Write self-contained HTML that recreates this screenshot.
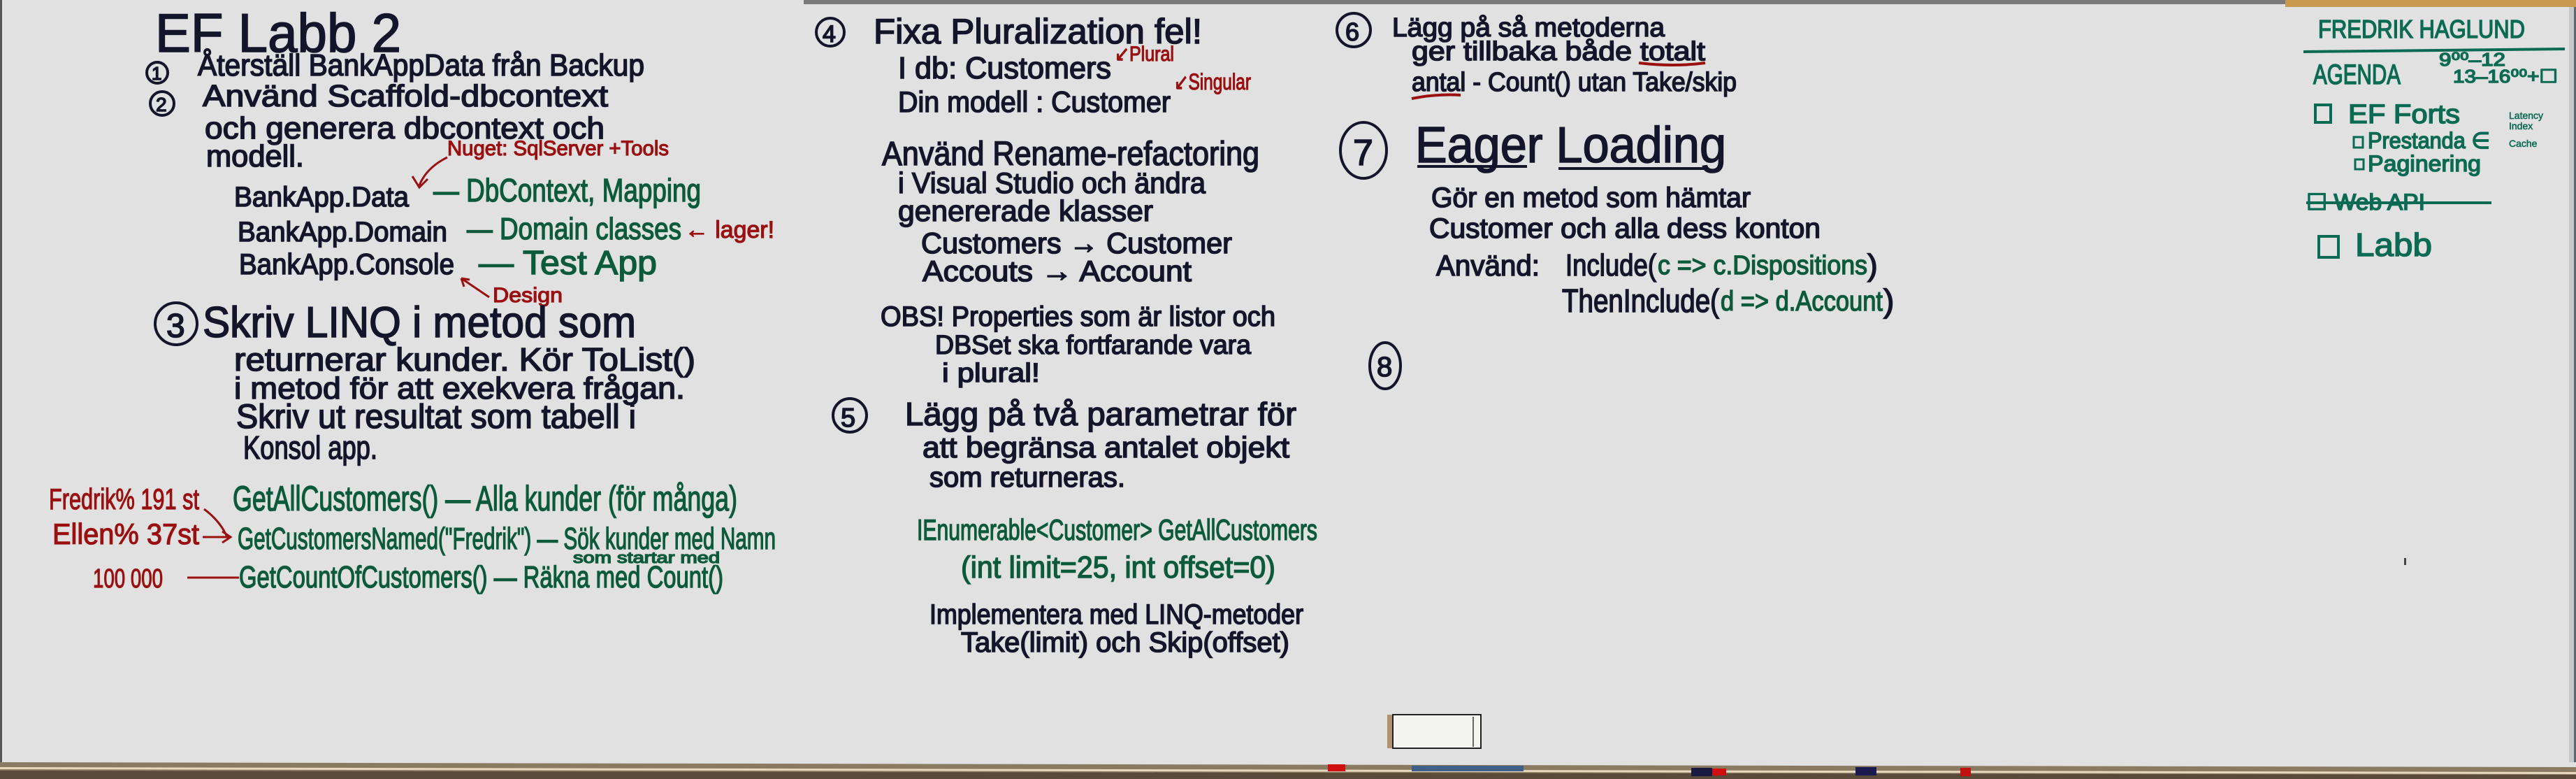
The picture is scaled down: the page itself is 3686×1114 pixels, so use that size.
<!DOCTYPE html>
<html><head><meta charset="utf-8"><style>
html,body{margin:0;padding:0;background:#e1e1e1;}
svg{display:block}
text{font-family:"Liberation Sans Narrow","Liberation Sans",sans-serif;}
.k{fill:#14142a;stroke:#14142a;stroke-width:1.6}.g{fill:#0c5a3c;stroke:#0c5a3c;stroke-width:1.4}.r{fill:#9a1010;stroke:#9a1010;stroke-width:1.2}.t{fill:#0b6a52;stroke:#0b6a52;stroke-width:1.5}
</style></head><body>
<svg width="3686" height="1114" viewBox="0 0 3686 1114" xmlns="http://www.w3.org/2000/svg">
<rect width="3686" height="1114" fill="#e1e1e1"/>
<rect x="1150" y="0" width="2120" height="6" fill="#7a7a7a"/>
<rect x="3270" y="0" width="416" height="10" fill="#c89a50"/>
<rect x="3676" y="10" width="10" height="1080" fill="#c8c8c8"/>
<rect x="3683" y="10" width="3" height="1080" fill="#5a6a70"/>
<rect x="0" y="0" width="3" height="1090" fill="#555"/>
<polygon points="0,1090 3686,1097 3686,1114 0,1114" fill="#8a7a62"/>
<polygon points="0,1097 3686,1104 3686,1107 0,1100" fill="#e8d8c0"/>
<polygon points="0,1102 3686,1108 3686,1114 0,1114" fill="#5a4a3a"/>
<rect x="1900" y="1093" width="25" height="10" fill="#d01010"/>
<rect x="2020" y="1095" width="160" height="8" fill="#40608a"/>
<rect x="2420" y="1098" width="30" height="12" fill="#1a1a40"/>
<rect x="2450" y="1099" width="20" height="10" fill="#d01010"/>
<rect x="2655" y="1097" width="30" height="12" fill="#1a1a50"/>
<rect x="2805" y="1098" width="15" height="12" fill="#c01010"/>
<rect x="1985" y="1022" width="55" height="48" fill="#a07040" opacity=".7"/>
<rect x="1993" y="1022" width="126" height="48" fill="#f4f4f0" stroke="#222" stroke-width="2"/>
<line x1="2108" y1="1025" x2="2108" y2="1068" stroke="#666" stroke-width="2"/>

<text class="k" x="222" y="74" font-size="78" textLength="352" lengthAdjust="spacingAndGlyphs">EF Labb 2</text>
<circle cx="225" cy="104" r="15" fill="none" stroke="#14142a" stroke-width="4"/>
<text class="k" x="217" y="114" font-size="26">1</text>
<text class="k" x="283" y="108" font-size="44" textLength="639" lengthAdjust="spacingAndGlyphs">Återställ BankAppData från Backup</text>
<circle cx="232" cy="148" r="17" fill="none" stroke="#14142a" stroke-width="4"/>
<text class="k" x="223" y="159" font-size="28">2</text>
<text class="k" x="290" y="152" font-size="44" textLength="580" lengthAdjust="spacingAndGlyphs">Använd  Scaffold-dbcontext</text>
<text class="k" x="293" y="198" font-size="44" textLength="572" lengthAdjust="spacingAndGlyphs">och generera dbcontext och</text>
<text class="k" x="295" y="238" font-size="44" textLength="140" lengthAdjust="spacingAndGlyphs">modell.</text>
<text class="r" x="640" y="222" font-size="30" textLength="317" lengthAdjust="spacingAndGlyphs">Nuget: SqlServer +Tools</text>
<path d="M640,225 Q610,240 600,265 M590,252 L600,268 L612,256" fill="none" stroke="#9a1010" stroke-width="3"/>
<text class="k" x="335" y="295" font-size="40" textLength="250" lengthAdjust="spacingAndGlyphs">BankApp.Data</text>
<text class="g" x="620" y="288" font-size="46" textLength="383" lengthAdjust="spacingAndGlyphs">— DbContext, Mapping</text>
<text class="k" x="340" y="345" font-size="40" textLength="300" lengthAdjust="spacingAndGlyphs">BankApp.Domain</text>
<text class="g" x="668" y="342" font-size="44" textLength="307" lengthAdjust="spacingAndGlyphs">— Domain classes</text>
<text class="r" x="980" y="340" font-size="34" textLength="128" lengthAdjust="spacingAndGlyphs">← lager!</text>
<text class="k" x="342" y="392" font-size="42" textLength="308" lengthAdjust="spacingAndGlyphs">BankApp.Console</text>
<text class="g" x="685" y="392" font-size="48" textLength="255" lengthAdjust="spacingAndGlyphs">— Test App</text>
<text class="r" x="705" y="432" font-size="30" textLength="100" lengthAdjust="spacingAndGlyphs">Design</text>
<path d="M700,425 L660,398 M660,398 L672,400 M660,398 L664,410" fill="none" stroke="#9a1010" stroke-width="3"/>
<circle cx="252" cy="463" r="30" fill="none" stroke="#14142a" stroke-width="4"/>
<text class="k" x="238" y="482" font-size="48">3</text>
<text class="k" x="290" y="482" font-size="62" textLength="620" lengthAdjust="spacingAndGlyphs">Skriv LINQ i metod som</text>
<text class="k" x="335" y="530" font-size="46" textLength="660" lengthAdjust="spacingAndGlyphs">returnerar kunder.  Kör ToList()</text>
<text class="k" x="335" y="570" font-size="44" textLength="645" lengthAdjust="spacingAndGlyphs">i metod för att exekvera frågan.</text>
<text class="k" x="338" y="612" font-size="48" textLength="572" lengthAdjust="spacingAndGlyphs">Skriv ut resultat som tabell i</text>
<text class="k" x="348" y="656" font-size="46" textLength="192" lengthAdjust="spacingAndGlyphs">Konsol app.</text>
<text class="r" x="70" y="728" font-size="42" textLength="215" lengthAdjust="spacingAndGlyphs">Fredrik% 191 st</text>
<text class="r" x="75" y="778" font-size="42" textLength="210" lengthAdjust="spacingAndGlyphs">Ellen%  37st</text>
<path d="M292,728 Q315,745 325,768 M290,768 L328,768 M318,760 L330,768 L318,776" fill="none" stroke="#9a1010" stroke-width="3"/>
<text class="g" x="333" y="730" font-size="50" textLength="722" lengthAdjust="spacingAndGlyphs">GetAllCustomers()  — Alla kunder (för många)</text>
<text class="g" x="340" y="785" font-size="44" textLength="770" lengthAdjust="spacingAndGlyphs">GetCustomersNamed("Fredrik") — Sök kunder med Namn</text>
<text class="g" x="820" y="805" font-size="22" textLength="210" lengthAdjust="spacingAndGlyphs">som startar med</text>
<text class="r" x="133" y="840" font-size="38" textLength="100" lengthAdjust="spacingAndGlyphs">100 000</text>
<line x1="268" y1="826" x2="342" y2="826" stroke="#9a1010" stroke-width="3"/>
<text class="g" x="342" y="840" font-size="44" textLength="693" lengthAdjust="spacingAndGlyphs">GetCountOfCustomers()  — Räkna med Count()</text>

<circle cx="1188" cy="46" r="20" fill="none" stroke="#14142a" stroke-width="4"/>
<text class="k" x="1177" y="60" font-size="34">4</text>
<text class="k" x="1250" y="62" font-size="50" textLength="470" lengthAdjust="spacingAndGlyphs">Fixa Pluralization fel!</text>
<text class="k" x="1285" y="112" font-size="44" textLength="305" lengthAdjust="spacingAndGlyphs">I db: Customers</text>
<text class="r" x="1595" y="87" font-size="30" textLength="85" lengthAdjust="spacingAndGlyphs">↙Plural</text>
<text class="k" x="1285" y="160" font-size="42" textLength="390" lengthAdjust="spacingAndGlyphs">Din modell : Customer</text>
<text class="r" x="1680" y="128" font-size="32" textLength="110" lengthAdjust="spacingAndGlyphs">↙Singular</text>
<text class="k" x="1262" y="236" font-size="48" textLength="540" lengthAdjust="spacingAndGlyphs">Använd Rename-refactoring</text>
<text class="k" x="1285" y="276" font-size="42" textLength="440" lengthAdjust="spacingAndGlyphs">i Visual Studio och ändra</text>
<text class="k" x="1285" y="316" font-size="42" textLength="365" lengthAdjust="spacingAndGlyphs">genererade klasser</text>
<text class="k" x="1318" y="362" font-size="42" textLength="445" lengthAdjust="spacingAndGlyphs">Customers  →  Customer</text>
<text class="k" x="1320" y="402" font-size="42" textLength="385" lengthAdjust="spacingAndGlyphs">Accouts  →  Account</text>
<text class="k" x="1260" y="466" font-size="40" textLength="565" lengthAdjust="spacingAndGlyphs">OBS! Properties som är listor och</text>
<text class="k" x="1338" y="506" font-size="38" textLength="452" lengthAdjust="spacingAndGlyphs">DBSet ska fortfarande vara</text>
<text class="k" x="1348" y="546" font-size="38" textLength="140" lengthAdjust="spacingAndGlyphs">i plural!</text>
<circle cx="1216" cy="594" r="24" fill="none" stroke="#14142a" stroke-width="4"/>
<text class="k" x="1203" y="610" font-size="38">5</text>
<text class="k" x="1295" y="608" font-size="46" textLength="560" lengthAdjust="spacingAndGlyphs">Lägg på två parametrar för</text>
<text class="k" x="1320" y="654" font-size="42" textLength="525" lengthAdjust="spacingAndGlyphs">att begränsa antalet objekt</text>
<text class="k" x="1330" y="696" font-size="40" textLength="280" lengthAdjust="spacingAndGlyphs">som returneras.</text>
<text class="g" x="1312" y="772" font-size="42" textLength="573" lengthAdjust="spacingAndGlyphs">IEnumerable&lt;Customer&gt; GetAllCustomers</text>
<text class="g" x="1375" y="826" font-size="44" textLength="450" lengthAdjust="spacingAndGlyphs">(int limit=25, int offset=0)</text>
<text class="k" x="1330" y="892" font-size="40" textLength="535" lengthAdjust="spacingAndGlyphs">Implementera med LINQ-metoder</text>
<text class="k" x="1375" y="932" font-size="40" textLength="470" lengthAdjust="spacingAndGlyphs">Take(limit)  och  Skip(offset)</text>

<circle cx="1937" cy="43" r="24" fill="none" stroke="#14142a" stroke-width="4"/>
<text class="k" x="1925" y="58" font-size="36">6</text>
<text class="k" x="1992" y="52" font-size="38" textLength="390" lengthAdjust="spacingAndGlyphs">Lägg på så metoderna</text>
<text class="k" x="2020" y="86" font-size="38" textLength="420" lengthAdjust="spacingAndGlyphs">ger tillbaka både totalt</text>
<path d="M2345,90 Q2395,96 2440,90" fill="none" stroke="#9a1010" stroke-width="4"/>
<text class="k" x="2020" y="130" font-size="38" textLength="465" lengthAdjust="spacingAndGlyphs">antal - Count() utan Take/skip</text>
<path d="M2020,141 Q2055,134 2090,136" fill="none" stroke="#9a1010" stroke-width="4"/>
<ellipse cx="1951" cy="215" rx="33" ry="40" fill="none" stroke="#14142a" stroke-width="4"/>
<text class="k" x="1936" y="236" font-size="52">7</text>
<text class="k" x="2025" y="232" font-size="72" textLength="445" lengthAdjust="spacingAndGlyphs">Eager   Loading</text>
<line x1="2028" y1="238" x2="2185" y2="238" stroke="#14142a" stroke-width="4"/>
<line x1="2230" y1="241" x2="2440" y2="241" stroke="#14142a" stroke-width="4"/>
<text class="k" x="2048" y="296" font-size="40" textLength="457" lengthAdjust="spacingAndGlyphs">Gör en metod som hämtar</text>
<text class="k" x="2045" y="340" font-size="40" textLength="560" lengthAdjust="spacingAndGlyphs">Customer och alla dess konton</text>
<text class="k" x="2055" y="394" font-size="42" textLength="148" lengthAdjust="spacingAndGlyphs">Använd:</text>
<text class="k" x="2240" y="394" font-size="44" textLength="130" lengthAdjust="spacingAndGlyphs">Include(</text>
<text class="g" x="2372" y="392" font-size="38" textLength="300" lengthAdjust="spacingAndGlyphs">c =&gt; c.Dispositions</text>
<text class="k" x="2672" y="394" font-size="44">)</text>
<text class="k" x="2235" y="446" font-size="46" textLength="225" lengthAdjust="spacingAndGlyphs">ThenInclude(</text>
<text class="g" x="2462" y="444" font-size="40" textLength="232" lengthAdjust="spacingAndGlyphs">d =&gt; d.Account</text>
<text class="k" x="2695" y="446" font-size="46">)</text>
<ellipse cx="1982" cy="523" rx="22" ry="33" fill="none" stroke="#14142a" stroke-width="4"/>
<text class="k" x="1970" y="538" font-size="40">8</text>

<text class="t" x="3317" y="54" font-size="36" textLength="296" lengthAdjust="spacingAndGlyphs">FREDRIK HAGLUND</text>
<line x1="3296" y1="74" x2="3670" y2="70" stroke="#0b6a52" stroke-width="4"/>
<text class="t" x="3310" y="120" font-size="40" textLength="125" lengthAdjust="spacingAndGlyphs">AGENDA</text>
<text class="t" x="3490" y="94" font-size="26" textLength="95" lengthAdjust="spacingAndGlyphs">9⁰⁰–12</text>
<text class="t" x="3510" y="118" font-size="26" textLength="150" lengthAdjust="spacingAndGlyphs">13–16⁰⁰+☐</text>
<rect x="3313" y="150" width="22" height="25" fill="none" stroke="#0b6a52" stroke-width="4"/>
<text class="t" x="3360" y="176" font-size="38" textLength="160" lengthAdjust="spacingAndGlyphs">EF Forts</text>
<rect x="3368" y="196" width="13" height="15" fill="none" stroke="#0b6a52" stroke-width="3"/>
<text class="t" x="3388" y="212" font-size="32" textLength="175" lengthAdjust="spacingAndGlyphs">Prestanda ∈</text>
<text class="t" x="3590" y="170" font-size="14" style="stroke-width:.5">Latency</text>
<text class="t" x="3590" y="185" font-size="14" style="stroke-width:.5">Index</text>
<text class="t" x="3590" y="210" font-size="14" style="stroke-width:.5">Cache</text>
<rect x="3370" y="228" width="12" height="14" fill="none" stroke="#0b6a52" stroke-width="3"/>
<text class="t" x="3388" y="245" font-size="32" textLength="162" lengthAdjust="spacingAndGlyphs">Paginering</text>
<text class="t" x="3300" y="300" font-size="32" textLength="170" lengthAdjust="spacingAndGlyphs">☐ Web API</text>
<line x1="3300" y1="290" x2="3565" y2="290" stroke="#0b6a52" stroke-width="4"/>
<rect x="3318" y="338" width="28" height="30" fill="none" stroke="#0b6a52" stroke-width="4"/>
<text class="t" x="3370" y="366" font-size="46" textLength="110" lengthAdjust="spacingAndGlyphs">Labb</text>
<rect x="3440" y="798" width="3" height="10" fill="#444"/>
</svg>
</body></html>
